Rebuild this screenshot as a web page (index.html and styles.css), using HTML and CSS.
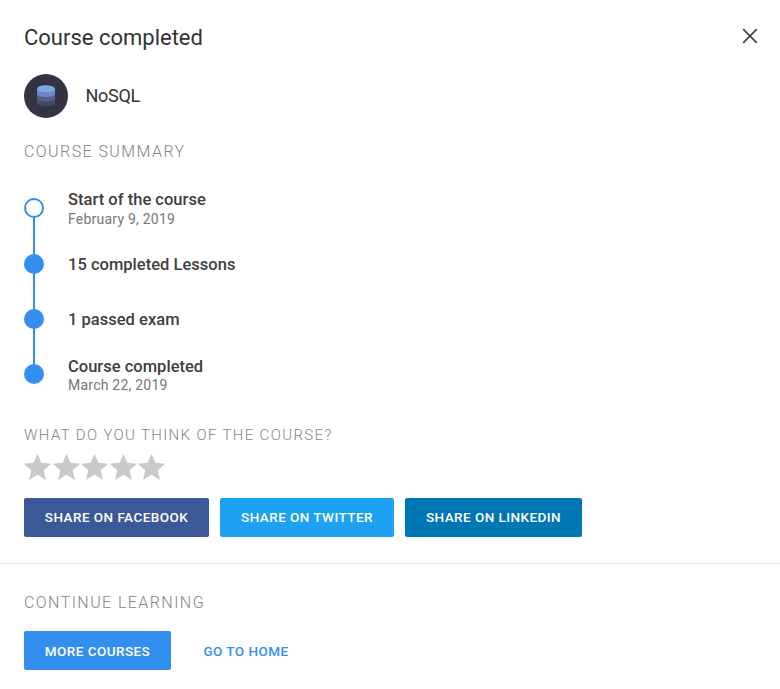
FILE: index.html
```html
<!DOCTYPE html>
<html lang="en">
<head>
<meta charset="utf-8">
<title>Course completed</title>
<link rel="stylesheet" href="styles.css">
</head>
<body>
<main class="dialog">
  <header class="header">
    <h1 class="title"><span>Course completed</span></h1>
    <button class="close" aria-label="Close"><svg width="16" height="16" viewBox="0 0 16 16"><path d="M1.200 1.200l13.600 13.600M14.800 1.200l-13.600 13.600"/></svg></button>
  </header>
  <div class="course">
    <svg class="badge" width="44" height="44" viewBox="0 0 44 44">
      <circle cx="22" cy="22" r="22" fill="#323444"/>
      <path d="M13 24v5c0 4 18 4 18 0v-5z" fill="#434b63"/>
      <path d="M13 20v4.500c0 4 18 4 18 0v-4.500z" fill="#566182"/>
      <path d="M13 15v5c0 4 18 4 18 0v-5z" fill="#7185c5"/>
      <ellipse cx="22" cy="14.800" rx="9" ry="3.500" fill="#7ba9dc"/>
    </svg>
    <h2 class="name"><span>NoSQL</span></h2>
  </div>
  <h3 class="label summary"><span>COURSE SUMMARY</span></h3>
  <ol class="timeline">
    <li class="step first"><i class="dot open"></i><div><b>Start of the course</b><small>February 9, 2019</small></div></li>
    <li class="step"><i class="dot"></i><div><b>15 completed Lessons</b></div></li>
    <li class="step exam"><i class="dot"></i><div><b>1 passed exam</b></div></li>
    <li class="step last"><i class="dot"></i><div><b>Course completed</b><small>March 22, 2019</small></div></li>
  </ol>
  <h3 class="label opinion"><span>WHAT DO YOU THINK OF THE COURSE?</span></h3>
  <div class="stars">
    <svg viewBox="0 0 24 24"><path d="M12 17.27L18.18 21l-1.64-7.03L22 9.24l-7.19-.61L12 2 9.19 8.63 2 9.24l5.46 4.73L5.82 21z"/></svg>
    <svg viewBox="0 0 24 24"><path d="M12 17.27L18.18 21l-1.64-7.03L22 9.24l-7.19-.61L12 2 9.19 8.63 2 9.24l5.46 4.73L5.82 21z"/></svg>
    <svg viewBox="0 0 24 24"><path d="M12 17.27L18.18 21l-1.64-7.03L22 9.24l-7.19-.61L12 2 9.19 8.63 2 9.24l5.46 4.73L5.82 21z"/></svg>
    <svg viewBox="0 0 24 24"><path d="M12 17.27L18.18 21l-1.64-7.03L22 9.24l-7.19-.61L12 2 9.19 8.63 2 9.24l5.46 4.73L5.82 21z"/></svg>
    <svg viewBox="0 0 24 24"><path d="M12 17.27L18.18 21l-1.64-7.03L22 9.24l-7.19-.61L12 2 9.19 8.63 2 9.24l5.46 4.73L5.82 21z"/></svg>
  </div>
  <div class="share">
    <button class="btn facebook">SHARE ON FACEBOOK</button>
    <button class="btn twitter">SHARE ON TWITTER</button>
    <button class="btn linkedin">SHARE ON LINKEDIN</button>
  </div>
  <footer class="footer">
    <h3 class="label continue"><span>CONTINUE LEARNING</span></h3>
    <div class="actions"><button class="btn more">MORE COURSES</button><button class="btn home">GO TO HOME</button></div>
  </footer>
</main>
</body>
</html>
```
FILE: styles.css
```css
* { box-sizing: border-box; }
body { margin: 0; background: #fff; color: #333; font-family: Roboto, sans-serif; }
h1, h2, h3, ol { margin: 0; padding: 0; font-weight: 400; }
button { border: 0; padding: 0; background: none; font-family: inherit; }
.dialog { height: 689px; overflow: hidden; }
.header { display: flex; justify-content: space-between; height: 74px; padding: 22px 22px 0 24px; }
.title { font-size: 22px; line-height: 32px; }
.close { width: 16px; height: 16px; margin-top: 6px; }
.close svg { display: block; fill: none; stroke: #444; stroke-width: 1.7; }
.course { display: flex; align-items: center; gap: 17.5px; height: 44px; padding-left: 24px; }
.name { font-size: 18px; line-height: 24px; letter-spacing: -.3px; }
.label { padding-left: 24px; color: #858585; font-weight: 300; font-size: 16px; line-height: 20px; letter-spacing: 1.43px; }
.summary { margin-top: 24px; }
.timeline { list-style: none; margin: 18px 0 0 24px; }
.step { display: flex; align-items: center; gap: 24px; height: 56px; position: relative; }
.exam { height: 54px; }
.last { height: 56px; }
.step:not(.last)::before { content: ""; position: absolute; left: 9px; top: 27px; width: 2px; height: 56px; background: #338fef; }
.first::before { top: 30px; }
.dot { width: 20px; height: 20px; flex: none; border-radius: 50%; background: #338fef; position: relative; }
.open { background: #fff; border: 2px solid #338fef; }
.step b, .step small { display: block; }
.step div { padding-top: 2px; }
.first div { padding-top: 3px; }
.last div { padding-top: 2px; }
.step b { color: #404040; font-size: 16.5px; line-height: 20px; font-weight: 500; letter-spacing: .02px; }
.step small { color: #777; font-size: 14px; line-height: 19px; letter-spacing: .23px; }
.step.last small { line-height: 16px; }
.opinion { margin-top: 23px; font-size: 15px; letter-spacing: 1.35px; }
.stars { display: flex; height: 32px; margin: 6px 0 0 21px; }
.stars svg { width: 33px; height: 33px; margin-right: -4.400px; fill: #cacaca; }
.share { display: flex; gap: 11px; margin: 15px 0 0 24px; }
.btn { height: 39px; border-radius: 2px; color: #fff; font-size: 13.5px; line-height: 16px; font-weight: 500; letter-spacing: .45px; }
.share .btn { padding-bottom: 1px; letter-spacing: .45px; }
.facebook { width: 185px; background: #3b5998; }
.twitter { width: 174px; background: #1da1f2; }
.linkedin { width: 177px; background: #0077b5; }
.footer { margin-top: 26px; padding-top: 29px; border-top: 1px solid #e9e9e9; }
.actions { display: flex; margin: 18px 0 0 24px; }
.more { width: 147px; background: #338fef; }
.home { width: 150px; color: #338fef; }
```
